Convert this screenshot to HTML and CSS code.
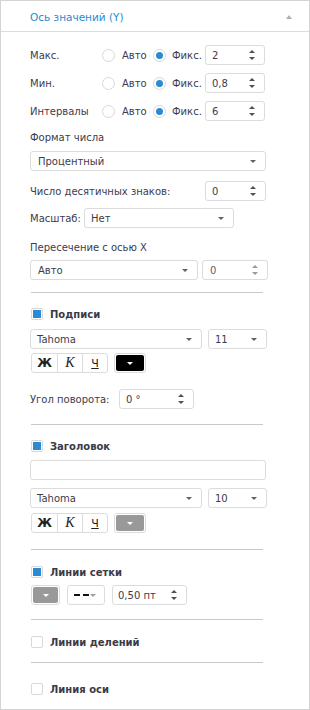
FILE: index.html
```html
<!DOCTYPE html>
<html lang="ru">
<head>
<meta charset="utf-8">
<link rel="stylesheet" href="styles.css">
</head>
<body>
<div class="panel">
  <div class="head">
    <span class="title">Ось значений (Y)</span>
    <span class="collapse"></span>
  </div>
  <div class="content">
    <div class="mode-row">
      <span class="lbl">Макс.</span>
      <span class="radio"></span><span class="rtext">Авто</span>
      <span class="radio on"></span><span class="rtext fix">Фикс.</span>
      <span class="field spin w60"><span class="val">2</span><span class="arrows"></span></span>
    </div>
    <div class="mode-row">
      <span class="lbl">Мин.</span>
      <span class="radio"></span><span class="rtext">Авто</span>
      <span class="radio on"></span><span class="rtext fix">Фикс.</span>
      <span class="field spin w60"><span class="val">0,8</span><span class="arrows"></span></span>
    </div>
    <div class="mode-row">
      <span class="lbl">Интервалы</span>
      <span class="radio"></span><span class="rtext">Авто</span>
      <span class="radio on"></span><span class="rtext fix">Фикс.</span>
      <span class="field spin w60"><span class="val">6</span><span class="arrows"></span></span>
    </div>

    <div class="caption fmt">Формат числа</div>
    <div class="field select full sel-fmt"><span class="val">Процентный</span><span class="caret"></span></div>

    <div class="line-row decimals">
      <span class="lbl-wide">Число десятичных знаков:</span>
      <span class="field spin w61"><span class="val">0</span><span class="arrows"></span></span>
    </div>

    <div class="line-row scale">
      <span class="lbl-scale">Масштаб:</span>
      <span class="field select w150"><span class="val">Нет</span><span class="caret"></span></span>
    </div>

    <div class="caption cross">Пересечение с осью X</div>
    <div class="line-row cross-row">
      <span class="field select w168"><span class="val">Авто</span><span class="caret"></span></span>
      <span class="field spin w66"><span class="val muted">0</span><span class="arrows muted"></span></span>
    </div>

    <div class="sep s1"></div>

    <div class="check-row c1"><span class="check on"></span><span class="ctext">Подписи</span></div>
    <div class="line-row font-row f1">
      <span class="field select w172"><span class="val">Tahoma</span><span class="caret"></span></span>
      <span class="field select w59"><span class="val">11</span><span class="caret"></span></span>
    </div>
    <div class="line-row style-row b1">
      <div class="biu">
        <span class="bb b">Ж</span><span class="bb i">К</span><span class="bb u">Ч</span>
      </div>
      <span class="color black"><span class="wcaret"></span></span>
    </div>
    <div class="line-row angle">
      <span class="lbl-angle">Угол поворота:</span>
      <span class="field spin w75"><span class="val">0 °</span><span class="arrows"></span></span>
    </div>

    <div class="sep s2"></div>

    <div class="check-row c2"><span class="check on"></span><span class="ctext">Заголовок</span></div>
    <div class="field full input"></div>
    <div class="line-row font-row f2">
      <span class="field select w172"><span class="val">Tahoma</span><span class="caret"></span></span>
      <span class="field select w59"><span class="val">10</span><span class="caret"></span></span>
    </div>
    <div class="line-row style-row b2">
      <div class="biu">
        <span class="bb b">Ж</span><span class="bb i">К</span><span class="bb u">Ч</span>
      </div>
      <span class="color gray"><span class="wcaret"></span></span>
    </div>

    <div class="sep s3"></div>

    <div class="check-row c3"><span class="check on"></span><span class="ctext">Линии сетки</span></div>
    <div class="line-row grid-row">
      <span class="color gray small"><span class="wcaret"></span></span>
      <span class="field select dash"><span class="dashes"><i></i><i></i></span><span class="caret light"></span></span>
      <span class="field spin w75"><span class="val">0,50 пт</span><span class="arrows"></span></span>
    </div>

    <div class="sep s4"></div>
    <div class="check-row c4"><span class="check"></span><span class="ctext">Линии делений</span></div>
    <div class="sep s5"></div>
    <div class="check-row c5"><span class="check"></span><span class="ctext">Линия оси</span></div>
  </div>
</div>
</body>
</html>
```

FILE: styles.css
```css
* { box-sizing: border-box; }
html, body { margin: 0; padding: 0; background: #fff; }
body {
  font-family: "DejaVu Sans", Verdana, sans-serif;
  font-size: 10px;
  color: #3c3c4c;
}
.panel {
  width: 310px;
  height: 710px;
  border: 1px solid #d4d4d4;
  background: #fff;
  overflow: hidden;
}
.head {
  height: 31px;
  border-bottom: 1px solid #dcdcdc;
  display: flex;
  align-items: center;
  padding: 0 17px 0 29px;
  justify-content: space-between;
}
.title {
  color: #2b8ad0;
  font-size: 10.5px;
  margin-top: 2px;
}
.collapse {
  width: 0; height: 0;
  border-left: 3px solid transparent;
  border-right: 3px solid transparent;
  border-bottom: 4px solid #b0b0b0;
  margin-top: 1px;
}
.content {
  padding: 13px 43px 0 29px;
}
.mode-row {
  display: flex;
  align-items: center;
  height: 20px;
  margin-bottom: 8px;
}
.lbl { width: 72px; }
.radio {
  width: 13px; height: 13px;
  border: 1px solid #d8d8d8;
  border-radius: 50%;
  background: #fff;
  position: relative;
  flex: none;
}
.radio.on::after {
  content: "";
  position: absolute;
  left: 2px; top: 2px;
  width: 7px; height: 7px;
  border-radius: 50%;
  background: #2b8ad0;
}
.rtext { margin-left: 7px; width: 31px; }
.rtext.fix { margin-left: 6px; width: 33px; }
.field {
  display: flex;
  align-items: center;
  height: 20px;
  border: 1px solid #dcdcdc;
  border-radius: 3px;
  background: #fff;
  position: relative;
  flex: none;
}
.field .val { padding-left: 6px; flex: 1; }
.val.muted { color: #606070; }
.arrows {
  width: 6px;
  height: 10px;
  margin-right: 9px;
  position: relative;
}
.arrows::before, .arrows::after {
  content: "";
  position: absolute;
  left: 0;
  border-left: 3px solid transparent;
  border-right: 3px solid transparent;
}
.arrows::before { top: 0; border-bottom: 3px solid #505050; }
.arrows::after { bottom: 0; border-top: 3px solid #505050; }
.arrows.muted::before { border-bottom-color: #9a9a9a; }
.arrows.muted::after { border-top-color: #9a9a9a; }
.caret {
  width: 0; height: 0;
  border-left: 3px solid transparent;
  border-right: 3px solid transparent;
  border-top: 3px solid #606060;
  margin-right: 9px;
}
.caret.light { border-top-color: #a0a0a0; margin-right: 8px; }
.w60 { width: 60px; }
.w61 { width: 61px; }
.w66 { width: 66px; }
.w75 { width: 75px; }
.w150 { width: 150px; }
.w168 { width: 168px; }
.w172 { width: 172px; }
.w59 { width: 59px; }
.full { width: 236px; }

.caption { height: 14px; line-height: 14px; }
.fmt { margin-top: 10px; }
.sel-fmt { margin-top: 6px; }
.sel-fmt .val { padding-left: 7px; }
.line-row { display: flex; align-items: center; }
.decimals { margin-top: 10px; }
.lbl-wide { width: 175px; }
.scale { margin-top: 7px; }
.lbl-scale { width: 54px; }
.cross { margin-top: 13px; }
.cross-row { margin-top: 5px; gap: 4px; }
.cross-row .val { padding-left: 7px; }

.sep {
  height: 1px;
  background: #c8c8c8;
  margin-left: 1px;
  margin-right: 3px;
}
.s1 { margin-top: 12px; }
.s2 { margin-top: 15px; }
.s3 { margin-top: 16px; }
.s4 { margin-top: 14px; }
.s5 { margin-top: 13px; }

.check-row {
  display: flex;
  align-items: center;
  height: 14px;
}
.check {
  width: 12px; height: 12px;
  border: 1px solid #d8d8d8;
  border-radius: 2px;
  margin-left: 1px;
  position: relative;
  flex: none;
}
.check.on::after {
  content: "";
  position: absolute;
  left: 1px; top: 1px;
  width: 8px; height: 8px;
  background: #2b8ad0;
}
.ctext {
  margin-left: 7px;
  font-weight: bold;
  font-size: 10px;
  color: #3a3a48;
}
.c1 { margin-top: 14px; }
.c2 { margin-top: 14px; }
.c3 { margin-top: 15px; }
.c4 { margin-top: 15px; }
.c5 { margin-top: 19px; }

.font-row { gap: 6px; }
.f1 { margin-top: 8px; }
.f2 { margin-top: 8px; }
.input { margin-top: 7px; }
.style-row { gap: 6px; }
.b1 { margin-top: 4px; }
.b2 { margin-top: 5px; }
.biu {
  display: flex;
  margin-left: 1px;
  height: 20px;
  border: 1px solid #dcdcdc;
  border-radius: 3px;
}
.bb {
  width: 25px;
  display: flex;
  align-items: center;
  justify-content: center;
  color: #222;
  font-size: 13px;
}
.bb + .bb { border-left: 1px solid #dcdcdc; }
.bb.b { font-weight: bold; font-family: "DejaVu Sans", sans-serif; font-size: 12px; }
.bb.i { font-style: italic; font-family: "Liberation Serif", serif; font-size: 14px; }
.bb.u { text-decoration: underline; font-size: 11px; }
.color {
  width: 32px; height: 20px;
  border: 1px solid #dcdcdc;
  border-radius: 3px;
  padding: 1px;
  display: flex;
  flex: none;
}
.color .wcaret {
  flex: 1;
  border-radius: 2px;
  position: relative;
}
.color.black .wcaret { background: #000; }
.color.gray .wcaret { background: #999; }
.wcaret::after {
  content: "";
  position: absolute;
  left: 50%; top: 50%;
  margin-left: -3px; margin-top: -1px;
  border-left: 3px solid transparent;
  border-right: 3px solid transparent;
  border-top: 3px solid #fff;
}
.color.small { width: 29px; margin-left: 1px; }
.angle { margin-top: 16px; }
.lbl-angle { width: 89px; }
.grid-row { margin-top: 6px; gap: 7px; }
.dash { width: 38px; }
.dashes { display: flex; gap: 3px; margin-left: 6px; flex: 1; }
.dashes i { display: block; width: 6px; height: 2px; background: #111; }
.grid-row .spin .val { padding-left: 5px; }
```
